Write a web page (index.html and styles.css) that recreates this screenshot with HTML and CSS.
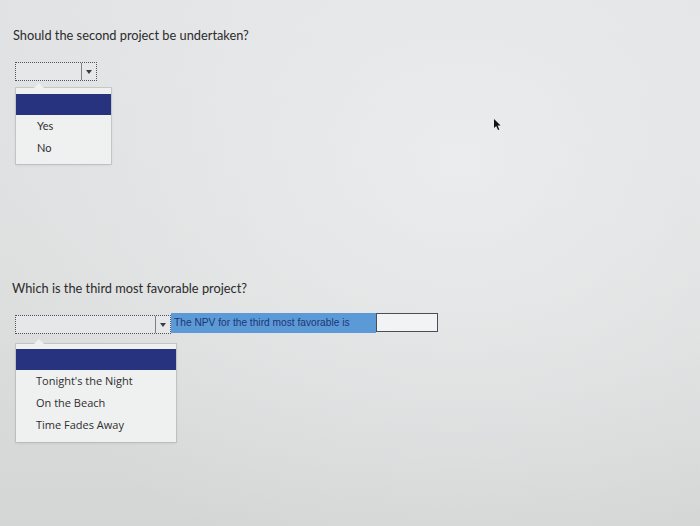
FILE: index.html
```html
<!DOCTYPE html>
<html>
<head>
<meta charset="utf-8">
<link rel="stylesheet" href="styles.css">
</head>
<body>
<div class="page">
  <section class="q q1">
    <p class="prompt">Should the second project be undertaken?</p>
    <div class="select small">
      <span class="field"></span>
      <span class="arrow"><span class="tri"></span></span>
    </div>
    <div class="menu menu1">
      <span class="notch"></span>
      <div class="hl"></div>
      <div class="opt">Yes</div>
      <div class="opt">No</div>
    </div>
  </section>

  <section class="q q2">
    <p class="prompt">Which is the third most favorable project?</p>
    <div class="row">
      <div class="select wide">
        <span class="field"></span>
        <span class="arrow"><span class="tri"></span></span>
      </div>
      <div class="label">The NPV for the third most favorable is</div>
      <div class="input"></div>
    </div>
    <div class="menu menu2">
      <span class="notch"></span>
      <div class="hl"></div>
      <div class="opt alt">Tonight's the Night</div>
      <div class="opt alt">On the Beach</div>
      <div class="opt alt">Time Fades Away</div>
    </div>
  </section>

  <svg class="cursor" width="9" height="13" viewBox="0 0 9 13"><path d="M1 1 L1 10 L3.2 8 L5 12 L6.3 11.4 L4.6 7.6 L7.6 7.6 Z" fill="#111"/></svg>
</div>
</body>
</html>
```

FILE: styles.css
```css
html, body {
  margin: 0;
  padding: 0;
}
body {
  width: 700px;
  height: 526px;
  overflow: hidden;
  background:
    radial-gradient(ellipse 520px 420px at 460px 160px, rgba(236,237,238,0.9), rgba(236,237,238,0) 100%),
    linear-gradient(180deg, #e1e2e3 0%, #dcdddd 60%, #d4d5d5 100%);
  font-family: Lato, "Liberation Sans", sans-serif;
  color: #2a2a2a;
}
.page {
  position: relative;
  height: 526px;
  padding: 0 0 0 12px;
  box-sizing: border-box;
}
.prompt {
  margin: 0;
  font-size: 12.8px;
  line-height: 14px;
  color: #2b2b2b;
}
.q1 {
  padding-top: 28px;
}
.q1 .prompt {
  padding-left: 1px;
}
.select {
  display: flex;
  height: 19px;
  box-sizing: border-box;
  border: 1px dotted #4e525c;
  background: #e6e7e8;
}
.select.small {
  width: 82px;
  margin: 20px 0 0 3px;
}
.select .field {
  flex: 1;
}
.select .arrow {
  width: 14px;
  border-left: 1px solid #7d808a;
  display: flex;
  align-items: center;
  justify-content: center;
}
.tri {
  width: 0;
  height: 0;
  border-left: 3px solid transparent;
  border-right: 3px solid transparent;
  border-top: 4px solid #3a3d48;
}
.menu {
  position: relative;
  margin: 7px 0 0 4px;
  background: #eff0f0;
  box-shadow: 0 0 0 1px rgba(160,162,165,0.4), 0 1px 3px rgba(0,0,0,0.1);
  padding: 6px 0 5px;
  box-sizing: border-box;
}
.notch {
  position: absolute;
  top: -5px;
  left: 18px;
  width: 0;
  height: 0;
  border-left: 5px solid transparent;
  border-right: 5px solid transparent;
  border-bottom: 5px solid #eff0f0;
}
.menu1 {
  width: 95px;
}
.hl {
  height: 21px;
  background: #28337f;
}
.opt {
  height: 22px;
  line-height: 22px;
  padding-left: 21px;
  font-size: 11px;
  color: #2e2e2e;
}
.q2 {
  padding-top: 117px;
}
.row {
  display: flex;
  align-items: flex-start;
  margin: 18px 0 0 3px;
}
.select.wide {
  width: 156px;
  margin-top: 2px;
}
.label {
  width: 205px;
  height: 20px;
  box-sizing: border-box;
  background: #5b9ad7;
  color: #1e3575;
  font-family: "Liberation Sans", Arial, sans-serif;
  font-size: 10.2px;
  line-height: 20px;
  padding-left: 3px;
}
.input {
  width: 62px;
  height: 19px;
  box-sizing: border-box;
  border: 1px solid #4a4e5a;
  background: #f2f3f4;
}
.menu2 {
  width: 160px;
  margin-top: 10px;
  padding: 5px 0 6px;
}
.opt.alt {
  font-family: "Open Sans", "DejaVu Sans", sans-serif;
  font-size: 11px;
  padding-left: 20px;
}
.cursor {
  position: absolute;
  left: 493px;
  top: 118px;
}
```
